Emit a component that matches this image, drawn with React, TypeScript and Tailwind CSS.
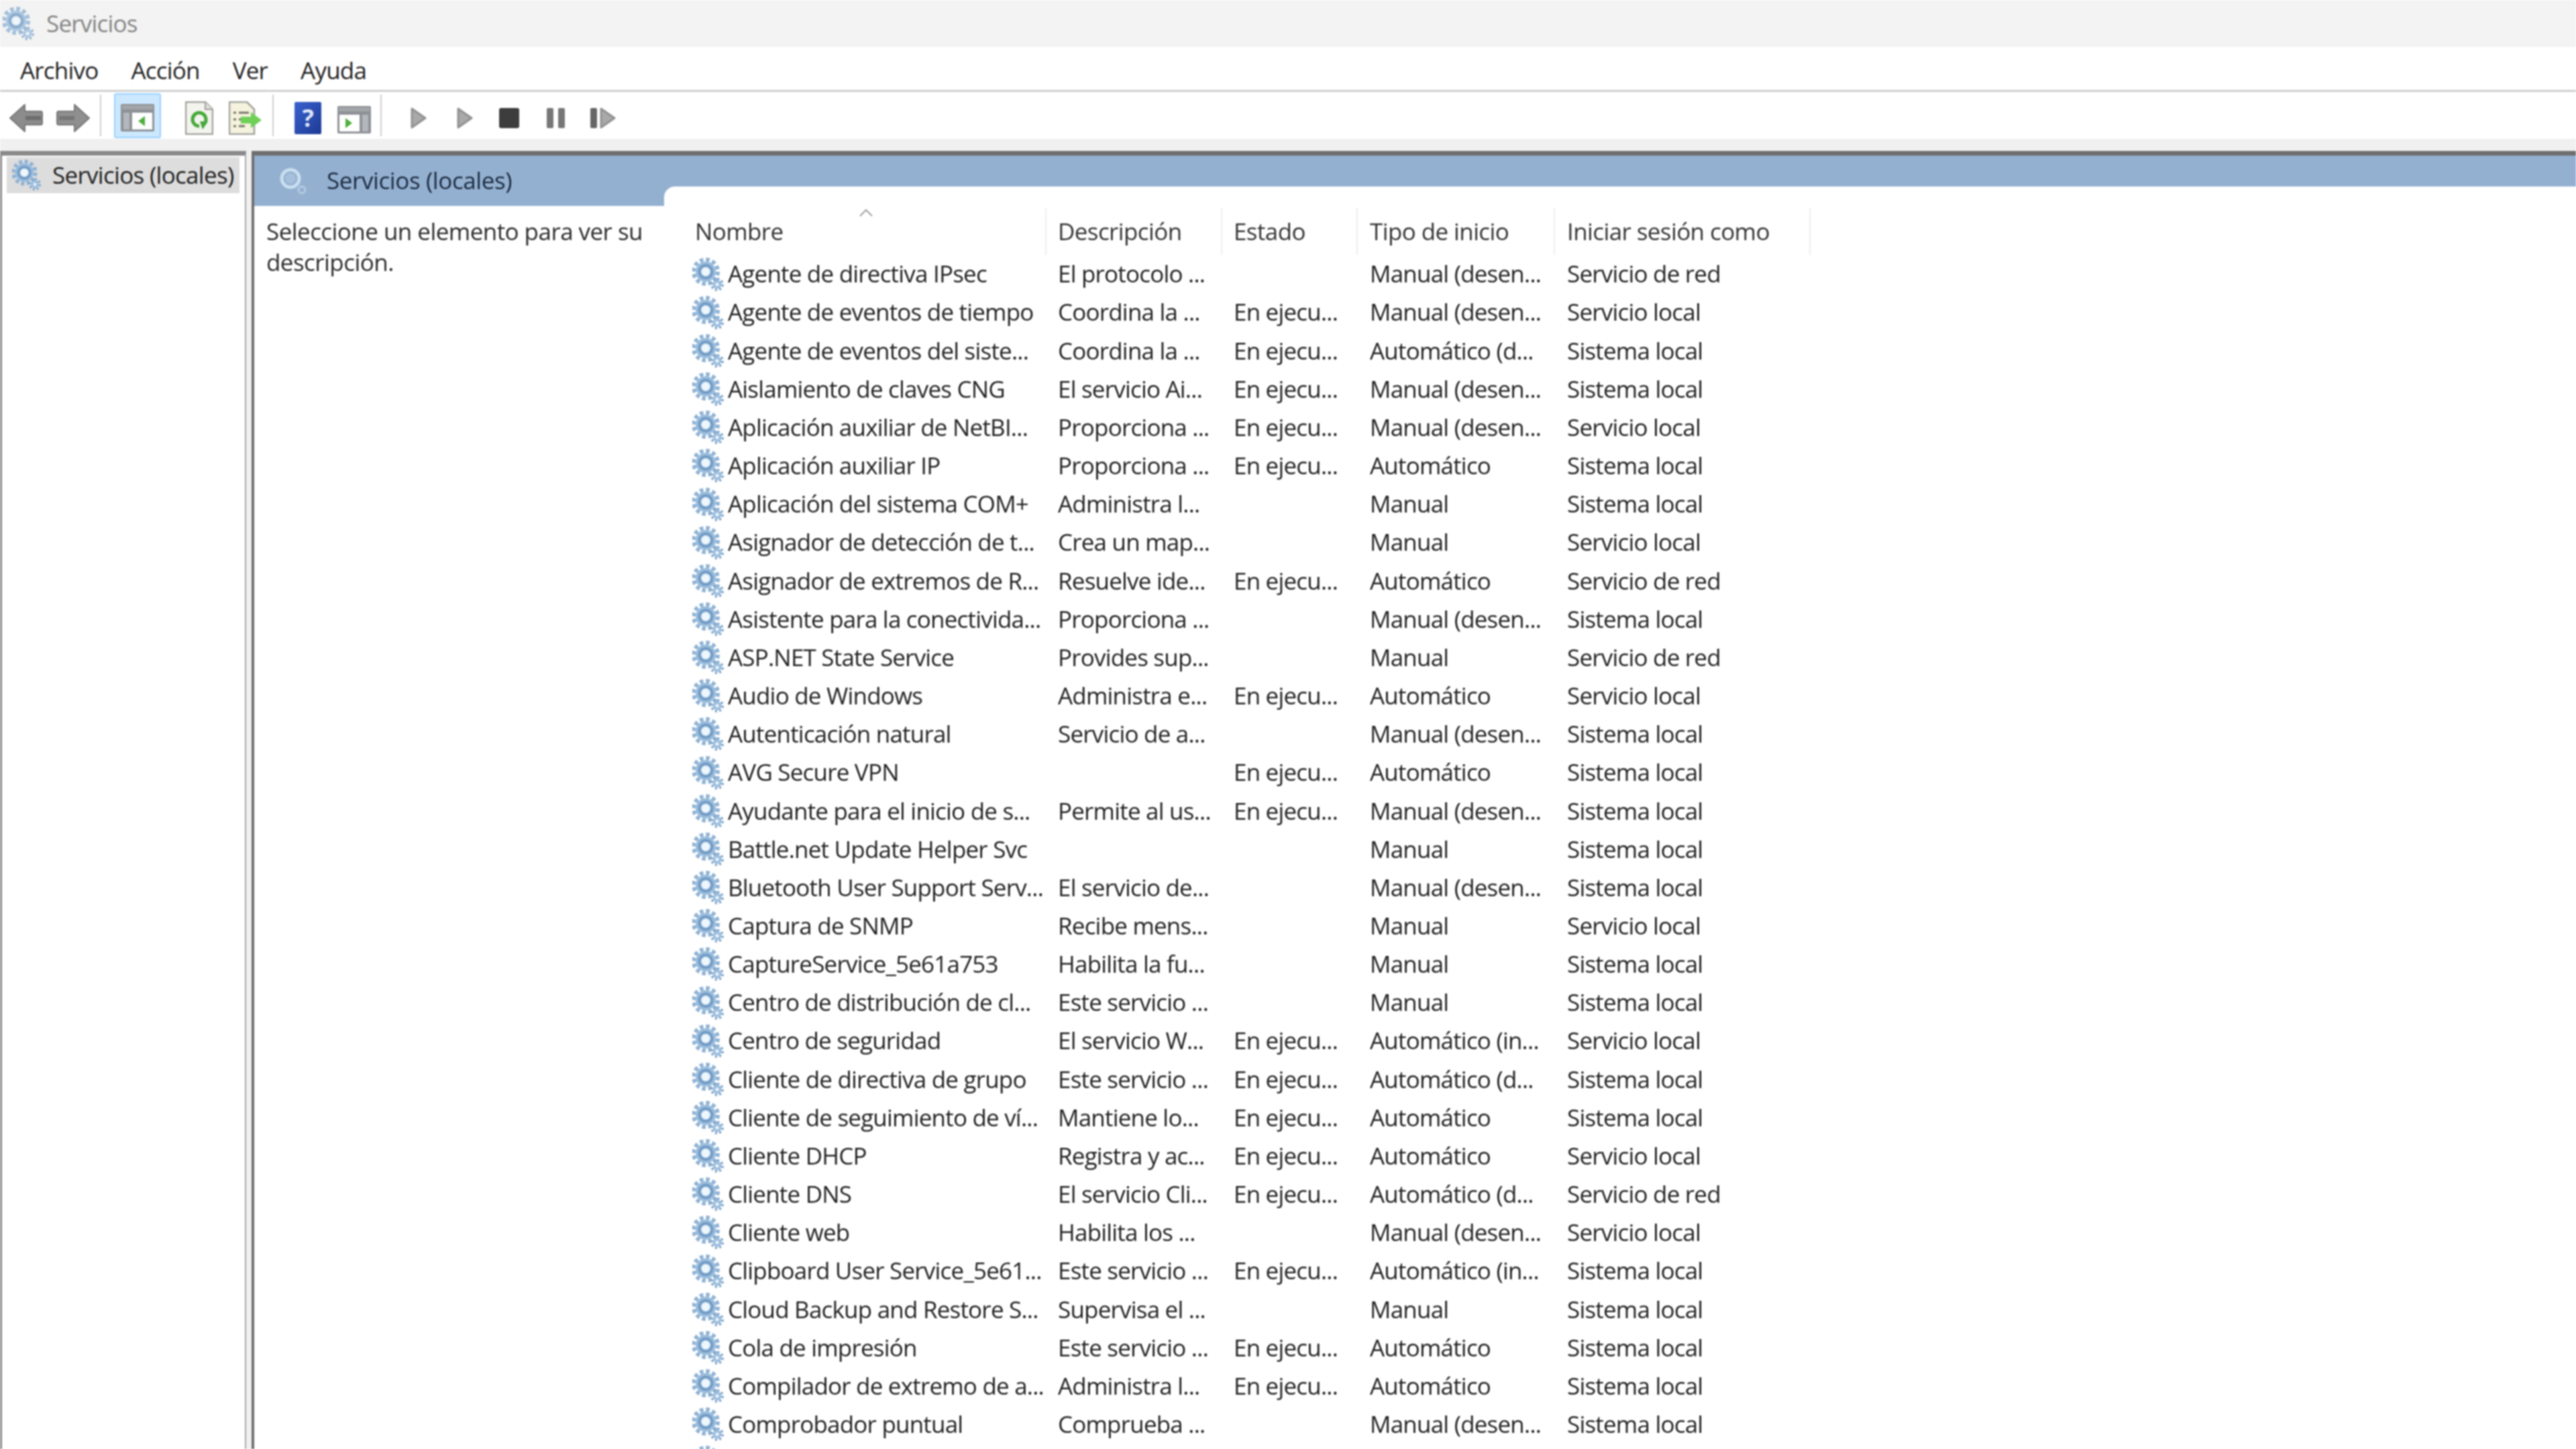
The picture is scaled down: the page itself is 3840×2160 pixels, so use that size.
const font = "[font-family:'Open_Sans','Noto_Sans',sans-serif]";

const rows: [string, string, string, string, string][] = [
  ['Agente de directiva IPsec', 'El protocolo ...', '', 'Manual (desen...', 'Servicio de red'],
  ['Agente de eventos de tiempo', 'Coordina la ...', 'En ejecu...', 'Manual (desen...', 'Servicio local'],
  ['Agente de eventos del siste...', 'Coordina la ...', 'En ejecu...', 'Automático (d...', 'Sistema local'],
  ['Aislamiento de claves CNG', 'El servicio Ai...', 'En ejecu...', 'Manual (desen...', 'Sistema local'],
  ['Aplicación auxiliar de NetBI...', 'Proporciona ...', 'En ejecu...', 'Manual (desen...', 'Servicio local'],
  ['Aplicación auxiliar IP', 'Proporciona ...', 'En ejecu...', 'Automático', 'Sistema local'],
  ['Aplicación del sistema COM+', 'Administra l...', '', 'Manual', 'Sistema local'],
  ['Asignador de detección de t...', 'Crea un map...', '', 'Manual', 'Servicio local'],
  ['Asignador de extremos de R...', 'Resuelve ide...', 'En ejecu...', 'Automático', 'Servicio de red'],
  ['Asistente para la conectivida...', 'Proporciona ...', '', 'Manual (desen...', 'Sistema local'],
  ['ASP.NET State Service', 'Provides sup...', '', 'Manual', 'Servicio de red'],
  ['Audio de Windows', 'Administra e...', 'En ejecu...', 'Automático', 'Servicio local'],
  ['Autenticación natural', 'Servicio de a...', '', 'Manual (desen...', 'Sistema local'],
  ['AVG Secure VPN', '', 'En ejecu...', 'Automático', 'Sistema local'],
  ['Ayudante para el inicio de s...', 'Permite al us...', 'En ejecu...', 'Manual (desen...', 'Sistema local'],
  ['Battle.net Update Helper Svc', '', '', 'Manual', 'Sistema local'],
  ['Bluetooth User Support Serv...', 'El servicio de...', '', 'Manual (desen...', 'Sistema local'],
  ['Captura de SNMP', 'Recibe mens...', '', 'Manual', 'Servicio local'],
  ['CaptureService_5e61a753', 'Habilita la fu...', '', 'Manual', 'Sistema local'],
  ['Centro de distribución de cl...', 'Este servicio ...', '', 'Manual', 'Sistema local'],
  ['Centro de seguridad', 'El servicio W...', 'En ejecu...', 'Automático (in...', 'Servicio local'],
  ['Cliente de directiva de grupo', 'Este servicio ...', 'En ejecu...', 'Automático (d...', 'Sistema local'],
  ['Cliente de seguimiento de ví...', 'Mantiene lo...', 'En ejecu...', 'Automático', 'Sistema local'],
  ['Cliente DHCP', 'Registra y ac...', 'En ejecu...', 'Automático', 'Servicio local'],
  ['Cliente DNS', 'El servicio Cli...', 'En ejecu...', 'Automático (d...', 'Servicio de red'],
  ['Cliente web', 'Habilita los ...', '', 'Manual (desen...', 'Servicio local'],
  ['Clipboard User Service_5e61...', 'Este servicio ...', 'En ejecu...', 'Automático (in...', 'Sistema local'],
  ['Cloud Backup and Restore S...', 'Supervisa el ...', '', 'Manual', 'Sistema local'],
  ['Cola de impresión', 'Este servicio ...', 'En ejecu...', 'Automático', 'Sistema local'],
  ['Compilador de extremo de a...', 'Administra l...', 'En ejecu...', 'Automático', 'Sistema local'],
  ['Comprobador puntual', 'Comprueba ...', '', 'Manual (desen...', 'Sistema local'],
  ['', '', '', '', ''],
];

function Gear({ className }: { className?: string }) {
  return (
    <svg viewBox="0 0 48 50" className={className}>
      <circle cx="20" cy="21" r="18" fill="none" stroke="#8fb2d4" strokeWidth="6" strokeDasharray="5.5 3.9" />
      <circle cx="20" cy="21" r="15" fill="#97bbdc" />
      <circle cx="20" cy="21" r="9.5" fill="none" stroke="#6e96c0" strokeWidth="3" />
      <circle cx="20" cy="21" r="6.5" fill="#eef7fd" />
      <circle cx="37" cy="40" r="8" fill="none" stroke="#7fa4c9" strokeWidth="4" strokeDasharray="3 3.3" />
      <circle cx="37" cy="40" r="6.5" fill="#9dbede" />
      <circle cx="37" cy="40" r="2.5" fill="#eef7fd" />
    </svg>
  );
}

// the faded variant that sits on the blue header band
function BandGear() {
  return (
    <svg viewBox="0 0 44 42" className="h-[42px] w-[44px]">
      <circle cx="18" cy="17" r="13" fill="none" stroke="#c9dff0" strokeWidth="5" />
      <circle cx="18" cy="17" r="8" fill="#a6bfda" />
      <circle cx="35" cy="34" r="5" fill="none" stroke="#b4cbe2" strokeWidth="3" />
    </svg>
  );
}

function BackArrow() {
  return (
    <svg viewBox="0 0 50 44" className="h-[44px] w-[50px]">
      <path d="M1 22 L23 2 V12 H47 Q49 12 49 15 V29 Q49 32 47 32 H23 V42 Z" fill="#8c8c8c" stroke="#777" strokeWidth="2" strokeLinejoin="round" />
      <path d="M24 19 H47 V25 H24 Z" fill="#6e6e6e" />
    </svg>
  );
}

function ForwardArrow() {
  return (
    <svg viewBox="0 0 50 44" className="h-[44px] w-[50px]">
      <path d="M49 22 L27 2 V12 H3 Q1 12 1 15 V29 Q1 32 3 32 H27 V42 Z" fill="#8f8f8f" stroke="#777" strokeWidth="2" strokeLinejoin="round" />
      <path d="M4 19 H27 V25 H4 Z" fill="#767676" />
    </svg>
  );
}

function PaneIcon({ flip }: { flip?: boolean }) {
  return (
    <svg viewBox="0 0 50 41" className="h-[41px] w-[50px]">
      <rect x="0" y="0" width="50" height="41" rx="2" fill="#8e9296" />
      <rect x="2" y="2" width="46" height="6" fill="#a3a6a9" />
      {flip ? (
        <g>
          <rect x="3" y="13" width="30" height="25" fill="#fff" />
          <rect x="37" y="13" width="9" height="25" fill="#b4b8bc" />
          <path d="M12 18 L22 25.5 L12 33 Z" fill="#4fae3d" />
        </g>
      ) : (
        <g>
          <rect x="17" y="13" width="30" height="25" fill="#fff" />
          <rect x="4" y="13" width="9" height="25" fill="#b4b8bc" />
          <path d="M36 18 L26 25.5 L36 33 Z" fill="#4fae3d" />
        </g>
      )}
    </svg>
  );
}

function RefreshDoc() {
  return (
    <svg viewBox="0 0 42 50" className="h-[50px] w-[42px]">
      <path d="M1 1 H30 L41 12 V49 H1 Z" fill="#f4f4ee" stroke="#a0a09c" strokeWidth="2.5" />
      <path d="M30 1 V12 H41" fill="#dedede" stroke="#a0a09c" strokeWidth="2" />
      <path d="M29 33 A10 10 0 1 0 21 37" fill="none" stroke="#46a83a" strokeWidth="5" />
      <path d="M22 30 L34 30 L26 42 Z" fill="#46a83a" />
    </svg>
  );
}

function ExportDoc() {
  return (
    <svg viewBox="0 0 50 50" className="h-[50px] w-[50px]">
      <path d="M1 1 H27 L38 12 V49 H1 Z" fill="#f5f2dd" stroke="#a0a09c" strokeWidth="2.5" />
      <path d="M7 17 H11 M15 17 H30 M7 27 H11 M15 27 H24 M7 37 H11 M15 37 H24" stroke="#77756b" strokeWidth="3" />
      <path d="M18 23 H33 V16 L49 28 L33 40 V33 H18 Z" fill="#6fd058" />
    </svg>
  );
}

function HelpBook() {
  return (
    <div className="flex h-[48px] w-[40px] items-center justify-center rounded-[2px] bg-gradient-to-br from-[#3a62cf] to-[#1d3a94] text-[36px] font-bold leading-none text-[#dfe7fa]">
      ?
    </div>
  );
}

function Play() {
  return (
    <svg viewBox="0 0 24 32" className="h-[32px] w-[24px]">
      <path d="M2 2 L22 16 L2 30 Z" fill="#a9a9a9" stroke="#919191" strokeWidth="3" strokeLinejoin="round" />
    </svg>
  );
}

function Sep() {
  return <div className="mt-[-7px] h-[62px] w-[2px] bg-[#cfcfcf]" />;
}

function Toolbar() {
  return (
    <div className="flex h-[70px] items-center bg-white pt-[7px] pl-[14px]">
      <BackArrow />
      <div className="w-[20px]" />
      <ForwardArrow />
      <div className="w-[15px]" />
      <Sep />
      <div className="mt-[-7px] ml-[19px] flex h-[67px] w-[70px] items-center justify-center rounded-[3px] border-2 border-[#99d1ff] bg-[#cce8ff]">
        <div className="mt-[7px]">
          <PaneIcon />
        </div>
      </div>
      <div className="w-[36px]" />
      <RefreshDoc />
      <div className="w-[23px]" />
      <ExportDoc />
      <div className="w-[15px]" />
      <Sep />
      <div className="w-[31px]" />
      <HelpBook />
      <div className="w-[24px]" />
      <div className="mt-[6px]"><PaneIcon flip /></div>
      <div className="w-[14px]" />
      <Sep />
      <div className="w-[43px]" />
      <Play />
      <div className="w-[45px]" />
      <Play />
      <div className="w-[39px]" />
      <div className="h-[30px] w-[30px] rounded-[3px] bg-[#3d3d3d]" />
      <div className="w-[41px]" />
      <div className="h-[30px] w-[10px] rounded-[2px] bg-[#777]" />
      <div className="w-[7px]" />
      <div className="h-[30px] w-[10px] rounded-[2px] bg-[#777]" />
      <div className="w-[38px]" />
      <div className="h-[30px] w-[10px] rounded-[2px] bg-[#666]" />
      <div className="w-[4px]" />
      <Play />
    </div>
  );
}

export default function App() {
  return (
    <div className="h-[2160px] w-[3840px] overflow-hidden bg-white">
      <div className={`flex h-full w-full flex-col text-[35px] text-[#222222] tracking-[-0.8px] blur-[1.2px] ${font}`}>
        <div className="flex h-[70px] shrink-0 items-center gap-[17px] bg-[#f3f3f3] pl-[4px] text-[#858585]">
          <Gear className="h-[50px] w-[48px] opacity-80" />
          <span>Servicios</span>
        </div>
        <div className="flex h-[64px] shrink-0 items-center gap-[49px] bg-white pt-[6px] pl-[30px]">
          <span>Archivo</span>
          <span>Acción</span>
          <span>Ver</span>
          <span>Ayuda</span>
        </div>
        <div className="h-[3px] shrink-0 bg-[#cfcfcf]" />
        <Toolbar />
        <div className="h-[18px] shrink-0 bg-[#f0f0f0]" />
        <div className="flex min-h-0 flex-1 bg-[#f0f0f0]">
          <div className="h-full w-[367px] shrink-0 border-t-[7px] border-r-[2px] border-l-[3px] border-t-[#8a8a8a] border-r-[#a8a8a8] border-l-[#8a8a8a] bg-white pt-[2px] pr-[8px] pl-[7px]">
            <div className="flex h-[54px] items-center gap-[16px] bg-[#dddddd] pl-[8px]">
              <Gear className="h-[48px] w-[44px] shrink-0" />
              <span className="whitespace-nowrap tracking-[-0.7px]">Servicios (locales)</span>
            </div>
          </div>
          <div className="h-full flex-1 pl-[8px]">
            <div className="flex h-full border-t-[7px] border-l-[4px] border-t-[#6e6e6e] border-l-[#6e6e6e] bg-white">
              <div className="w-[611px] shrink-0">
                <div className="flex h-[75px] items-center gap-[28px] bg-[#94b0d0] pl-[36px] text-[#1c2b40]">
                  <BandGear />
                  <span className="tracking-[-0.4px]">Servicios (locales)</span>
                </div>
                <p className="mt-[15px] px-[18px] leading-[46px] tracking-[-0.55px] text-[#2b2b2b]">
                  Seleccione un elemento para ver su descripción.
                </p>
              </div>
              <div className="min-w-0 flex-1 bg-[linear-gradient(#94b0d0_75px,white_75px)] pt-[46px]">
                <div className="h-full rounded-tl-[16px] bg-white pt-[27px] pl-[30px]">
                  <div className="relative grid h-[75px] w-[1679px] grid-cols-[540px_262px_202px_294px_381px] pt-[5px] tracking-[-0.6px] text-[#333333]">
                    <span className="flex items-center border-r-2 border-[#eeeeee] pl-[16px]">Nombre</span>
                    <span className="flex items-center border-r-2 border-[#eeeeee] pl-[17px]">Descripción</span>
                    <span className="flex items-center border-r-2 border-[#eeeeee] pl-[17px]">Estado</span>
                    <span className="flex items-center border-r-2 border-[#eeeeee] pl-[18px]">Tipo de inicio</span>
                    <span className="flex items-center border-r-2 border-[#eeeeee] pl-[18px]">Iniciar sesión como</span>
                    <svg viewBox="0 0 22 12" className="absolute top-[6px] left-[260px] h-[12px] w-[22px]">
                      <path d="M2 11 L11 2 L20 11" fill="none" stroke="#a0a0a0" strokeWidth="2" />
                    </svg>
                  </div>
                  {rows.map((r, i) => (
                    <div key={i} className="grid h-[57.17px] w-[1679px] grid-cols-[540px_262px_202px_294px_381px] items-center whitespace-nowrap">
                      <span className="flex items-center gap-[5px] pl-[12px]">
                        <Gear className="h-[50px] w-[48px] shrink-0" />
                        {r[0]}
                      </span>
                      <span className="pl-[17px]">{r[1]}</span>
                      <span className="pl-[17px]">{r[2]}</span>
                      <span className="pl-[18px]">{r[3]}</span>
                      <span className="pl-[18px]">{r[4]}</span>
                    </div>
                  ))}
                </div>
              </div>
            </div>
          </div>
        </div>
      </div>
    </div>
  );
}
